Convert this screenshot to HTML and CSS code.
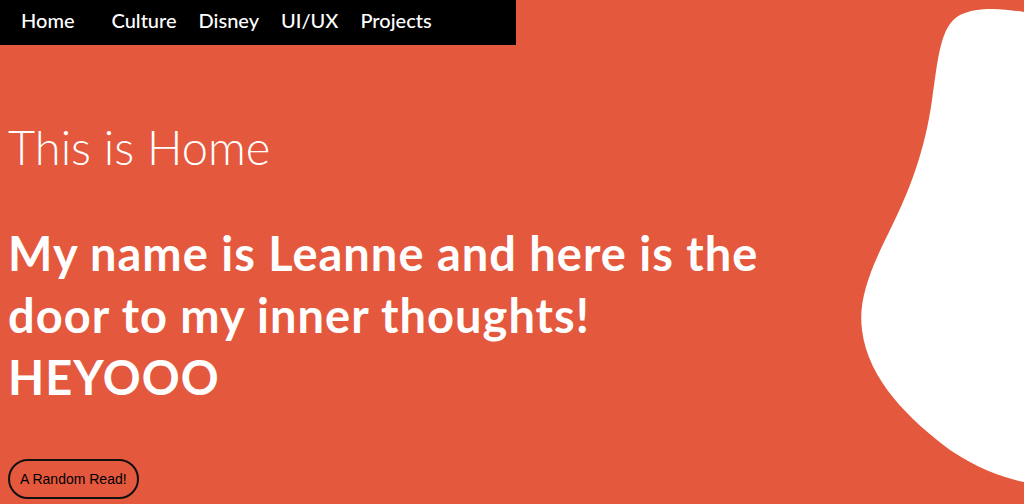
FILE: index.html
```html
<!DOCTYPE html>
<html lang="en">
<head>
<meta charset="utf-8">
<title>Home</title>
<link rel="stylesheet" href="styles.css">
</head>
<body>
<nav class="topnav">
  <a class="nav-link nav-home" href="#">Home</a>
  <a class="nav-link" href="#">Culture</a>
  <a class="nav-link" href="#">Disney</a>
  <a class="nav-link" href="#">UI/UX</a>
  <a class="nav-link" href="#">Projects</a>
</nav>
<svg class="blob" viewBox="0 0 184 504" preserveAspectRatio="none" aria-hidden="true">
  <path d="M184 12 C170 10 140 5 120 15 C100 25 98 60 92 100 C85 150 70 190 50 230 C30 270 18 300 22 330 C28 380 70 420 110 450 C140 470 165 478 184 482 Z" fill="#ffffff"/>
</svg>
<main class="content">
  <h1 class="title">This is Home</h1>
  <h2 class="intro">My name is Leanne and here is the<br>door to my inner thoughts!<br>HEYOOO</h2>
  <button class="random-btn" type="button">A Random Read!</button>
</main>
</body>
</html>
```

FILE: styles.css
```css
html, body {
  margin: 0;
  padding: 0;
  height: 100%;
}
body {
  background: #e4583e;
  font-family: Lato, "Open Sans", sans-serif;
  color: #ffffff;
  overflow: hidden;
  position: relative;
}
.topnav {
  width: 516px;
  height: 45px;
  background: #000000;
  display: flex;
  align-items: flex-start;
  padding: 8px 0 0 21px;
  box-sizing: border-box;
  gap: 22px;
}
.nav-link {
  color: #ffffff;
  text-decoration: none;
  font-size: 20px;
  font-weight: 500;
  line-height: 24px;
}
.nav-home {
  margin-right: 15px;
}
.blob {
  position: absolute;
  top: 0;
  right: 0;
  width: 184px;
  height: 504px;
}
.content {
  padding: 0 8px;
  position: relative;
}
.title {
  margin: 0;
  padding-top: 74px;
  font-size: 47px;
  font-weight: 300;
  line-height: 1.2;
}
.intro {
  margin: 47px 0 0;
  font-size: 47px;
  font-weight: 700;
  line-height: 62px;
  letter-spacing: 1px;
}
.random-btn {
  margin-top: 51px;
  background: transparent;
  border: 2px solid #111111;
  border-radius: 20px;
  height: 40px;
  padding: 0 10px;
  font-family: "Liberation Sans", Arial, sans-serif;
  font-size: 14px;
  color: #000000;
}
```
